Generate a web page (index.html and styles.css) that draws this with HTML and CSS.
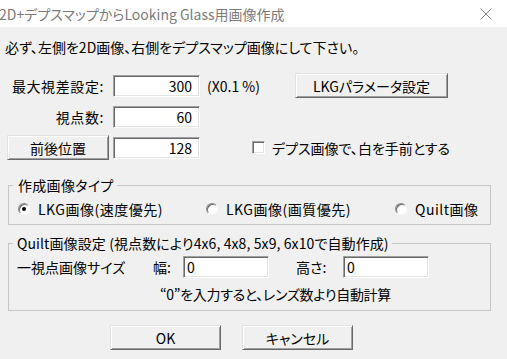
FILE: index.html
```html
<!DOCTYPE html>
<html lang="ja">
<head>
    <meta charset="UTF-8">
    <title>2D+デプスマップからLooking Glass用画像作成</title>
    <link rel="stylesheet" href="styles.css">
</head>
<body>
    <div class="titlebar">
        <span class="title">2D+デプスマップからLooking Glass用画像作成</span>
        <svg class="close" width="12" height="12" viewBox="0 0 12 12">
            <path d="M0.5 0.5 L11.5 11.5 M11.5 0.5 L0.5 11.5" stroke="#8a8a8a" stroke-width="1" fill="none"/>
        </svg>
    </div>

    <p class="notice">必ず、左側を2D画像、右側をデプスマップ画像にして下さい。</p>

    <div class="row first-row">
        <label class="field-label">最大視差設定:</label>
        <input class="edit num" type="text" value="300">
        <span class="unit">(X0.1 %)</span>
        <button class="btn btn-lkg">LKGパラメータ設定</button>
    </div>

    <div class="row">
        <label class="field-label">視点数:</label>
        <input class="edit num" type="text" value="60">
    </div>

    <div class="row">
        <button class="btn btn-depth">前後位置</button>
        <input class="edit num" type="text" value="128">
        <label class="check"><span class="checkbox"></span>デプス画像で、白を手前とする</label>
    </div>

    <fieldset class="group group-type">
        <legend>作成画像タイプ</legend>
        <div class="options">
            <label class="option opt-speed"><span class="radio checked"></span>LKG画像(速度優先)</label>
            <label class="option opt-quality"><span class="radio"></span>LKG画像(画質優先)</label>
            <label class="option"><span class="radio"></span>Quilt画像</label>
        </div>
    </fieldset>

    <fieldset class="group group-quilt">
        <legend class="tight">Quilt画像設定 (視点数により4x6, 4x8, 5x9, 6x10で自動作成)</legend>
        <div class="size-row">
            <span class="size-label">一視点画像サイズ</span>
            <span class="w-label">幅:</span>
            <input class="edit size-edit" type="text" value="0">
            <span class="h-label">高さ:</span>
            <input class="edit size-edit" type="text" value="0">
        </div>
        <p class="hint">“0”を入力すると、レンズ数より自動計算</p>
    </fieldset>

    <div class="actions">
        <button class="btn btn-action">OK</button>
        <button class="btn btn-action">キャンセル</button>
    </div>
</body>
</html>
```

FILE: styles.css
```css
body {
    margin: 0;
    width: 507px;
    height: 359px;
    overflow: hidden;
    background-color: #f0f0f0;
    font-family: "Noto Sans CJK JP", sans-serif;
    font-size: 14px;
    font-feature-settings: "palt";
    color: #000;
}

.titlebar {
    height: 27px;
    background-color: #fff;
    display: flex;
    align-items: center;
    justify-content: space-between;
    padding-right: 15px;
}

.title {
    margin-left: -1px;
    color: #7a7a7a;
    font-size: 14px;
}

.notice {
    margin: 10px 0 0 5px;
    line-height: 20px;
}

.row {
    display: flex;
    align-items: center;
    height: 25px;
    padding-left: 7px;
    margin-top: 6px;
}

.row > * {
    flex-shrink: 0;
}

.first-row {
    margin-top: 16px;
}

.field-label {
    box-sizing: border-box;
    width: 102px;
    padding-right: 5px;
    text-align: right;
    letter-spacing: 0.6px;
}

.edit {
    box-sizing: border-box;
    height: 22px;
    margin: 0 0 0 4px;
    padding: 0 7px;
    font: inherit;
    background-color: #fff;
    border: 1px solid;
    border-color: #a0a0a0 #fff #fff #a0a0a0;
    box-shadow: inset 1px 1px #696969, inset -1px -1px #e3e3e3;
    outline: none;
}

.num {
    width: 87px;
    text-align: right;
}

.unit {
    width: 88px;
    margin-left: 7px;
}

.btn {
    box-sizing: border-box;
    height: 25px;
    padding: 0;
    font: inherit;
    color: #000;
    background-color: #f0f0f0;
    border: 1px solid;
    border-color: #e3e3e3 #696969 #696969 #e3e3e3;
    box-shadow: inset 1px 1px #fff, inset -1px -1px #a0a0a0;
}

.btn-lkg {
    width: 153px;
}

.btn-depth {
    width: 102px;
}

.check {
    display: flex;
    align-items: center;
    margin-left: 52px;
}

.checkbox {
    box-sizing: border-box;
    width: 13px;
    height: 13px;
    margin-right: 7px;
    background-color: #fff;
    border: 1px solid;
    border-color: #a0a0a0 #fff #fff #a0a0a0;
    box-shadow: inset 1px 1px #696969, inset -1px -1px #e3e3e3;
}

.group {
    box-sizing: border-box;
    width: 483px;
    margin: 0 0 0 8px;
    padding: 0;
    min-width: 0;
    border: 1px solid #c6c6c6;
}

.group legend {
    margin-left: 4px;
    padding: 0 3px 0 5px;
    line-height: 20px;
    letter-spacing: 0.3px;
}

.group legend.tight {
    padding-left: 4px;
    letter-spacing: 0.1px;
}

.group-type {
    margin-top: 15px;
    padding-bottom: 5px;
}

.options {
    display: flex;
    align-items: center;
    height: 20px;
    margin-top: 4px;
    padding-left: 9px;
}

.option {
    display: flex;
    align-items: center;
    flex-shrink: 0;
    letter-spacing: 0.5px;
}

.opt-speed {
    width: 188px;
}

.opt-quality {
    width: 189px;
}

.radio {
    position: relative;
    box-sizing: border-box;
    width: 12px;
    height: 12px;
    margin-right: 8px;
    border-radius: 50%;
    background-color: #fff;
    border: 1px solid;
    border-color: #8a8a8a #f8f8f8 #f8f8f8 #8a8a8a;
    box-shadow: inset 1px 1px #6a6a6a;
}

.radio.checked::after {
    content: "";
    position: absolute;
    left: 3px;
    top: 3px;
    width: 4px;
    height: 4px;
    border-radius: 50%;
    background-color: #000;
}

.group-quilt {
    margin-top: 8px;
    padding-bottom: 6px;
}

.size-row {
    display: flex;
    align-items: center;
    height: 22px;
    margin-top: 3px;
    padding-left: 8px;
}

.size-row > * {
    flex-shrink: 0;
}

.size-label {
    width: 136px;
}

.w-label {
    width: 30px;
}

.size-edit {
    width: 86px;
    margin-left: 0;
    padding: 0 3px;
}

.h-label {
    width: 47px;
    margin-left: 27px;
}

.hint {
    margin: 6px 0 0 151px;
    line-height: 20px;
    letter-spacing: -0.3px;
}

.actions {
    display: flex;
    gap: 21px;
    margin-top: 14px;
    padding-left: 110px;
}

.btn-action {
    width: 111px;
}
```
